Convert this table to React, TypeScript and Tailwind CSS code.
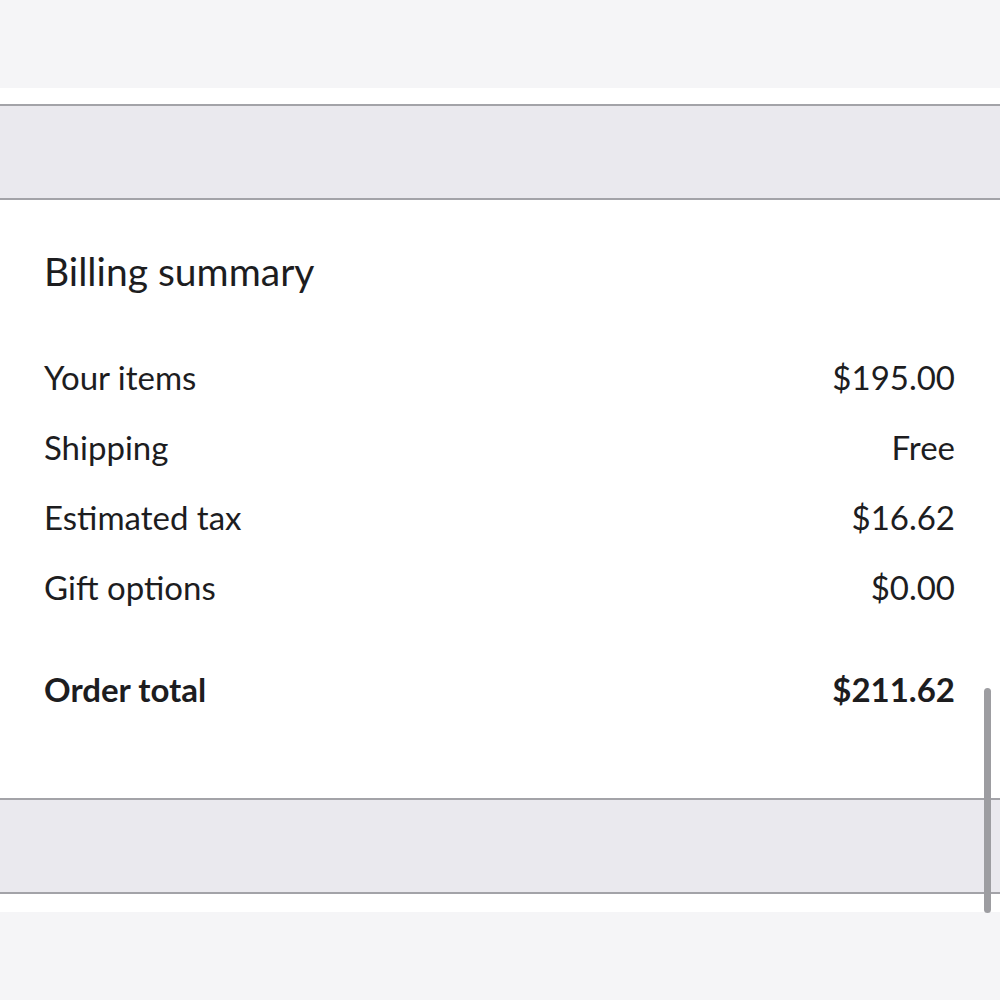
import React from "react";

const rows = [
  { label: "Your items", value: "$195.00" },
  { label: "Shipping", value: "Free" },
  { label: "Estimated tax", value: "$16.62" },
  { label: "Gift options", value: "$0.00" },
];

export default function App() {
  return (
    <div className="relative w-[1000px] h-[1000px] bg-white text-[#1d1d1f] overflow-hidden" style={{ fontFamily: "Lato, 'Open Sans', sans-serif" }}>
      <div className="h-[88px] bg-[#f5f5f7]" />
      <div className="h-[16px] bg-white" />
      <div className="h-[96px] bg-[#eae9ee] border-y-2 border-[#a3a3a8]" />
      <div className="h-[598px] px-[44px] pr-[45px] pt-[47px]">
        <h2 className="text-[39px] leading-[48px]">Billing summary</h2>
        <div className="mt-[48px] flex flex-col">
          {rows.map((r) => (
            <div key={r.label} className="flex justify-between items-center h-[70px] text-[33px]">
              <span>{r.label}</span>
              <span>{r.value}</span>
            </div>
          ))}
        </div>
        <div className="mt-[47px] flex justify-between items-center h-[40px] text-[33px] font-bold">
          <span>Order total</span>
          <span>$211.62</span>
        </div>
      </div>
      <div className="h-[96px] bg-[#eae9ee] border-y-2 border-[#a3a3a8]" />
      <div className="h-[18px] bg-white" />
      <div className="h-[88px] bg-[#f5f5f7]" />
      <div className="absolute left-[984px] top-[688px] w-[7px] h-[225px] rounded-full bg-[#9d9da1]" />
    </div>
  );
}
